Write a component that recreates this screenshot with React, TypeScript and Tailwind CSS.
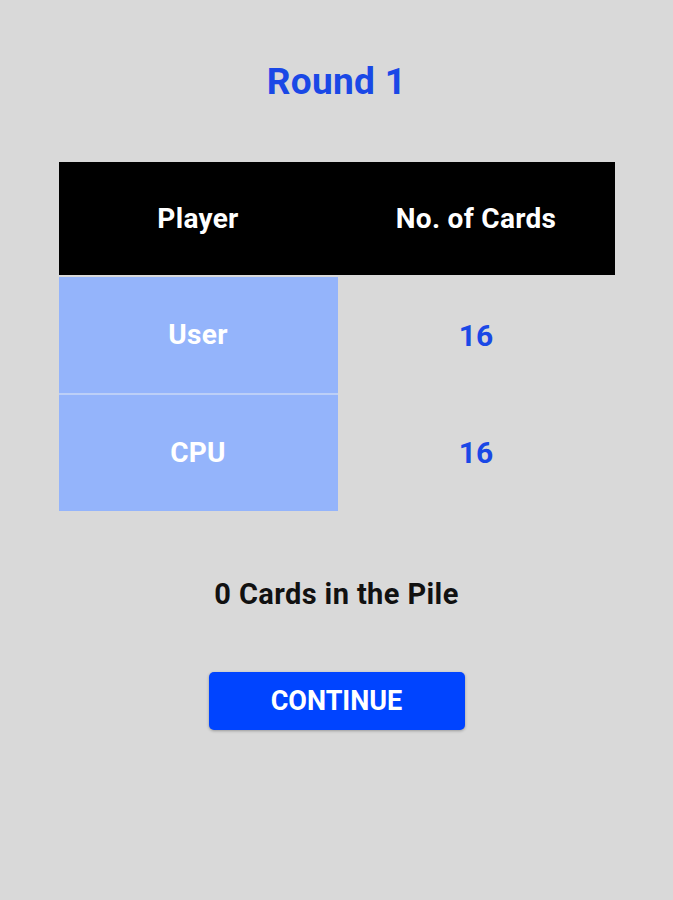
import React from "react";

const rows = [
  { name: "User", cards: 16 },
  { name: "CPU", cards: 16 },
];

export default function App() {
  return (
    <div
      className="min-h-[900px] w-[673px] bg-[#d9d9d9] flex flex-col items-center"
      style={{ fontFamily: "Roboto, 'Liberation Sans', sans-serif" }}
    >
      <h1 className="mt-[60px] h-[44px] leading-[44px] text-[37px] font-bold tracking-[0.3px] text-[#1a48e6]">
        Round 1
      </h1>

      <div className="mt-[58px] w-[556px] flex flex-col">
        <div className="h-[113px] bg-black grid grid-cols-[279px_277px] items-center text-white text-[28px] font-bold tracking-[0.3px]">
          <div className="text-center">Player</div>
          <div className="text-center">No. of Cards</div>
        </div>

        <div className="mt-[2px] flex flex-col">
          {rows.map((r, i) => (
            <div
              key={r.name}
              className={"grid grid-cols-[279px_277px] " + (i > 0 ? "h-[118px]" : "h-[116px]")}
            >
              <div
                className={
                  "bg-[#94b4fb] flex items-center justify-center text-white text-[28px] font-bold tracking-[0.3px] " +
                  (i > 0 ? "border-t-2 border-[#bccff7]" : "")
                }
              >
                {r.name}
              </div>
              <div className="flex items-center justify-center text-[#1a48e6] text-[30px] font-bold">
                {r.cards}
              </div>
            </div>
          ))}
        </div>
      </div>

      <p className="mt-[65px] h-[36px] leading-[36px] text-[29px] font-bold tracking-[0.4px] text-[#111]">
        0 Cards in the Pile
      </p>

      <button className="mt-[60px] w-[256px] h-[58px] rounded-[5px] bg-[#0044ff] text-white text-[27px] font-bold shadow-[0_1px_3px_rgba(0,0,0,0.3)]">
        CONTINUE
      </button>
    </div>
  );
}
